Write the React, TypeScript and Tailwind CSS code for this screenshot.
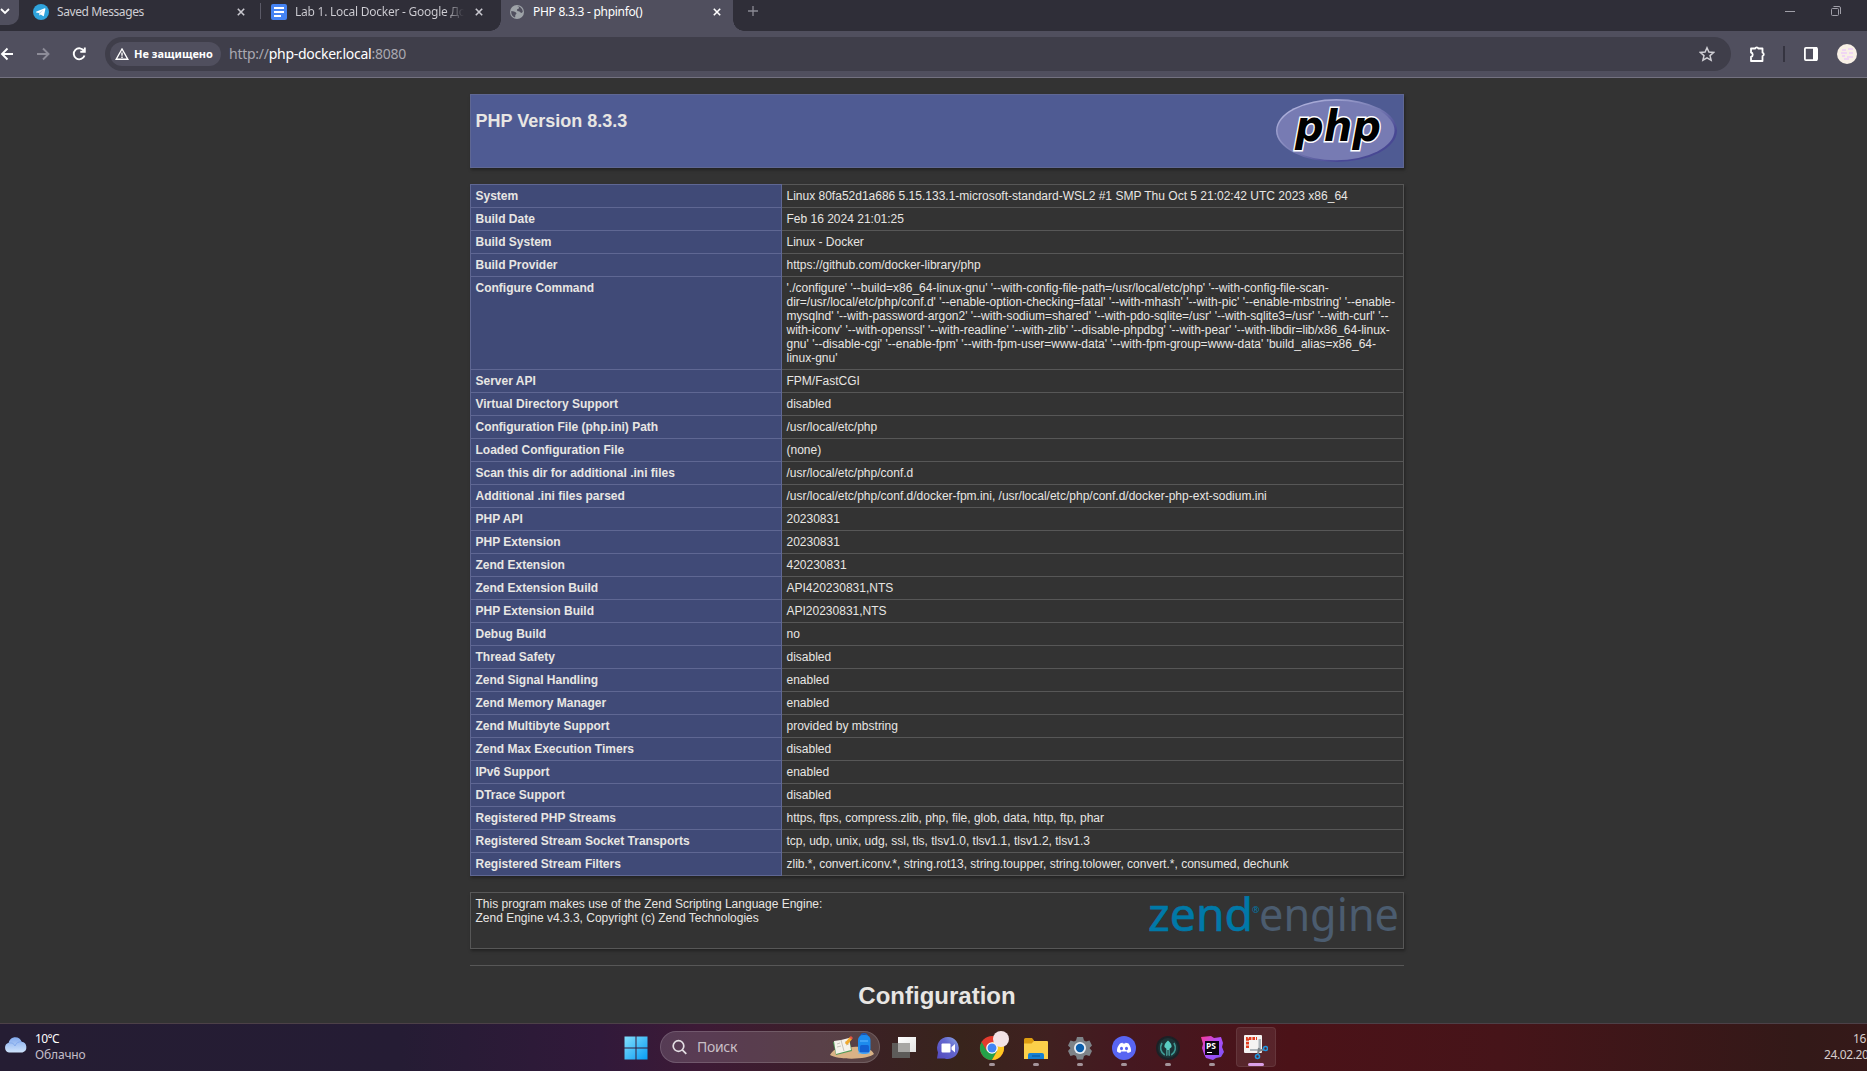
import React from "react";

const rows: [string, React.ReactNode][] = [
  ["System", "Linux 80fa52d1a686 5.15.133.1-microsoft-standard-WSL2 #1 SMP Thu Oct 5 21:02:42 UTC 2023 x86_64"],
  ["Build Date", "Feb 16 2024 21:01:25"],
  ["Build System", "Linux - Docker"],
  ["Build Provider", "https://github.com/docker-library/php"],
  [
    "Configure Command",
    <>
      './configure' '--build=x86_64-linux-gnu' '--with-config-file-path=/usr/local/etc/php' '--with-config-file-scan-
      <br />
      dir=/usr/local/etc/php/conf.d' '--enable-option-checking=fatal' '--with-mhash' '--with-pic' '--enable-mbstring' '--enable-
      <br />
      mysqlnd' '--with-password-argon2' '--with-sodium=shared' '--with-pdo-sqlite=/usr' '--with-sqlite3=/usr' '--with-curl' '--
      <br />
      with-iconv' '--with-openssl' '--with-readline' '--with-zlib' '--disable-phpdbg' '--with-pear' '--with-libdir=lib/x86_64-linux-
      <br />
      gnu' '--disable-cgi' '--enable-fpm' '--with-fpm-user=www-data' '--with-fpm-group=www-data' 'build_alias=x86_64-
      <br />
      linux-gnu'
    </>,
  ],
  ["Server API", "FPM/FastCGI"],
  ["Virtual Directory Support", "disabled"],
  ["Configuration File (php.ini) Path", "/usr/local/etc/php"],
  ["Loaded Configuration File", "(none)"],
  ["Scan this dir for additional .ini files", "/usr/local/etc/php/conf.d"],
  ["Additional .ini files parsed", "/usr/local/etc/php/conf.d/docker-fpm.ini, /usr/local/etc/php/conf.d/docker-php-ext-sodium.ini"],
  ["PHP API", "20230831"],
  ["PHP Extension", "20230831"],
  ["Zend Extension", "420230831"],
  ["Zend Extension Build", "API420230831,NTS"],
  ["PHP Extension Build", "API20230831,NTS"],
  ["Debug Build", "no"],
  ["Thread Safety", "disabled"],
  ["Zend Signal Handling", "enabled"],
  ["Zend Memory Manager", "enabled"],
  ["Zend Multibyte Support", "provided by mbstring"],
  ["Zend Max Execution Timers", "disabled"],
  ["IPv6 Support", "enabled"],
  ["DTrace Support", "disabled"],
  ["Registered PHP Streams", "https, ftps, compress.zlib, php, file, glob, data, http, ftp, phar"],
  ["Registered Stream Socket Transports", "tcp, udp, unix, udg, ssl, tls, tlsv1.0, tlsv1.1, tlsv1.2, tlsv1.3"],
  ["Registered Stream Filters", "zlib.*, convert.iconv.*, string.rot13, string.toupper, string.tolower, convert.*, consumed, dechunk"],
];

function Close({ bright = false }: { bright?: boolean }) {
  return (
    <svg width="8" height="8" viewBox="0 0 8 8" className={bright ? "text-white" : "text-[#c9c8cf]"}>
      <path d="M.8.8l6.4 6.4M7.2.8L.8 7.2" stroke="currentColor" strokeWidth="1.6" />
    </svg>
  );
}

function TabStrip() {
  return (
    <div className="flex h-[31px] bg-[#2f2e38] text-[12px] leading-[16px] text-[#cfced4]">
      <div className="flex h-[25px] w-[19px] items-start rounded-br-[10px] bg-[#504f5e]">
        <svg width="11" height="22" viewBox="0 0 11 22">
          <path d="M1 9l4 4 4-4" fill="none" stroke="#fff" strokeWidth="1.8" />
        </svg>
      </div>
      <div className="flex h-[23px] w-[241px] items-center pl-[14px]">
        <svg width="16" height="16" viewBox="0 0 16 16" className="shrink-0">
          <circle cx="8" cy="8" r="8" fill="#2fa3dc" />
          <path d="M3 7.8l8.7-3.5c.5-.2.8.1.7.6l-1.5 6.8c-.1.5-.5.6-.9.3L7.700 10.400l-1.200 1.200-.5-2.700L3.100 8.400z" fill="#fff" />
          <path d="M6 9l4.800-3.400L7 9.600l-.5 2z" fill="#b5d9ee" />
        </svg>
        <span className="ml-[8px] flex-1 whitespace-nowrap tracking-[-0.4px]">Saved Messages</span>
        <span className="mr-[15px]"><Close /></span>
      </div>
      <div className="mt-[3px] h-[16px] w-[1px] bg-[#5b5a67]" />
      <div className="flex h-[23px] w-[240px] items-center pl-[10px]">
        <svg width="16" height="16" viewBox="0 0 16 16" className="shrink-0">
          <rect width="16" height="16" rx="2" fill="#4583f3" />
          <path d="M3 4h10M3 8h10M3 12h7" stroke="#fff" strokeWidth="1.8" />
        </svg>
        <span className="ml-[8px] w-[169px] whitespace-nowrap bg-gradient-to-r from-[#cfced4] from-89% to-transparent to-100% bg-clip-text tracking-[-0.25px] text-transparent">
          Lab 1. Local Docker - Google До
        </span>
        <span className="ml-[11px]"><Close /></span>
      </div>
      <div className="w-[1px] bg-[#2f2e38]" />
      <div className="relative -ml-px flex h-[31px] w-[232px] bg-[#504f5e] pl-[9px] text-white">
        <div className="absolute -left-[11px] bottom-0 h-[11px] w-[11px] bg-[radial-gradient(circle_at_0_0,#2f2e38_10.500px,#504f5e_11px)]" />
        <div className="absolute -right-[11px] bottom-0 h-[11px] w-[11px] bg-[radial-gradient(circle_at_100%_0,#2f2e38_10.500px,#504f5e_11px)]" />
        <div className="flex h-[23px] w-full items-center">
          <svg width="14" height="14" viewBox="0 0 14 14" className="shrink-0">
            <circle cx="7" cy="7" r="7" fill="#9ea3a8" />
            <path d="M7 1c2 .5 2.500 2 1.500 2.800C7 4 6.500 5 7.500 6c1 .8 2.500.3 3 1.500.8 1 2 .2 2.300-1A6 6 0 0 0 7 1zM1.300 6c2 .2 3.700.8 4.700 1.600 1 1 .2 1.700-.5 2.200-.5.6 0 1.600-.5 2.700A6 6 0 0 1 1.300 6z" fill="#504f5e" />
          </svg>
          <span className="ml-[9px] flex-1 tracking-[-0.27px]">PHP 8.3.3 - phpinfo()</span>
          <span className="mr-[12px]"><Close bright /></span>
        </div>
      </div>
      <svg width="10" height="22" viewBox="0 0 10 22" className="ml-[15px]">
        <path d="M5 6v10M0 11h10" stroke="#8b8a94" strokeWidth="1.300" />
      </svg>
      <svg width="57" height="22" viewBox="0 0 57 22" className="mr-[26px] ml-auto" fill="none" stroke="#a09fa8">
        <path d="M1 11.500h10M49.500 6.500h5.500a1.500 1.500 0 0 1 1.500 1.500v6" />
        <rect x="47.500" y="8.500" width="7" height="7" rx="1" />
      </svg>
    </div>
  );
}

function Toolbar() {
  return (
    <div className="flex h-[47px] items-start border-b border-[#737180] bg-[#504f5e] pt-[6px]">
      <svg width="105" height="34" viewBox="0 0 105 34" fill="none" strokeWidth="1.900">
        <path d="M13 17H2M7.500 11.500L2 17l5.500 5.500" stroke="#fff" />
        <path d="M37 17h11M43 11.500l5.500 5.500-5.500 5.500" stroke="#8d8c98" />
        <path d="M84 14a5.500 5.500 0 1 0 .5 4.500M84.800 10.500v4.300h-4.500" stroke="#fff" />
      </svg>
      <div className="flex h-[34px] w-[1626px] items-center rounded-full bg-[#3f3e4a] pl-[5px]">
        <div className="flex h-[24px] w-[111px] items-center rounded-full bg-[#504f5e] pl-[5px] text-[11px] font-bold text-white">
          <svg width="14" height="12" viewBox="0 0 14 12" fill="none" stroke="#fff" strokeWidth="1.400">
            <path d="M7 1L1.200 11.200h11.600z" />
            <path d="M7 4.500v3.300M7 8.600v1.300" />
          </svg>
          <span className="ml-[5px] whitespace-nowrap">Не защищено</span>
        </div>
        <span className="-mt-[2px] ml-[8px] text-[14px] tracking-[-0.27px] text-[#a9a8b0]">
          http://<span className="text-white">php-docker.local</span>:8080
        </span>
        <svg width="16" height="16" viewBox="0 0 16 16" className="mr-[16px] ml-auto">
          <path d="M8 1.800l1.900 4.300 4.700.4-3.600 3.100 1.100 4.600L8 11.800l-4.100 2.400L5 9.600 1.400 6.500l4.700-.4z" fill="none" stroke="#d0cfd5" strokeWidth="1.500" />
        </svg>
      </div>
      <svg width="136" height="34" viewBox="0 0 136 34" fill="none">
        <path d="M20 11.500h4.200a1.600 1.600 0 0 1 3.100 0h4.200v4.200a1.700 1.700 0 0 1 0 3.300v5H20v-4.200a2.200 2.200 0 0 0 0-4.300z" stroke="#fff" strokeWidth="1.800" strokeLinejoin="round" />
        <path d="M53 9v16" stroke="#353440" strokeWidth="2" />
        <rect x="73.900" y="10.900" width="12.200" height="12.200" rx="1" stroke="#fff" strokeWidth="1.800" />
        <path d="M82 10h4v14h-4z" fill="#fff" />
        <circle cx="116" cy="17" r="10" fill="#f8f0e6" />
        <path d="M111 13h4M117 12h5M110 16h6M118 16h4M111 19h3M116 20h6M113 22h5" stroke="#f0d6f3" strokeWidth="2" />
      </svg>
    </div>
  );
}

function PhpLogo() {
  return (
    <svg width="122" height="65" viewBox="0 0 122 65">
      <defs>
        <linearGradient id="rim" x1="0" y1="0" x2="1" y2="1">
          <stop offset=".1" stopColor="#b3b5df" />
          <stop offset=".5" stopColor="#777bb3" />
          <stop offset=".75" stopColor="#484893" />
        </linearGradient>
      </defs>
      <ellipse cx="60.500" cy="32.500" rx="60.500" ry="31.500" fill="url(#rim)" />
      <ellipse cx="60" cy="32.500" rx="58.500" ry="29.700" fill="#777bb3" />
      <text
        x="19"
        y="42.500"
        textLength="86"
        lengthAdjust="spacingAndGlyphs"
        fontFamily="DejaVu Sans"
        fontSize="43"
        fontWeight="bold"
        fontStyle="italic"
        stroke="#fff"
        strokeWidth="3"
        paintOrder="stroke"
      >
        php
      </text>
    </svg>
  );
}

function ZendLogo() {
  return (
    <svg width="254" height="48" viewBox="0 0 254 48" className="overflow-visible" fontFamily="Noto Sans, sans-serif">
      <text x="1" y="34" fontSize="46" textLength="105" lengthAdjust="spacingAndGlyphs" fill="#0079a8" stroke="#0079a8" strokeWidth=".6">zend</text>
      <text x="105" y="15.500" fontSize="9" fill="#0079a8">®</text>
      <text x="112" y="34" fontSize="46" textLength="140" lengthAdjust="spacingAndGlyphs" fill="#4b5c6f">engine</text>
    </svg>
  );
}

function PhpInfo() {
  return (
    <div className="h-[945px] overflow-hidden bg-[#333333] pt-[16px] font-['Liberation_Sans',sans-serif] text-[12px] leading-[14px] text-[#e8e6e3]">
      <div className="ml-[470px] w-[934px]">
        <div className="flex h-[74px] justify-between border border-[#5f6793] bg-[#4f5b93] pl-[4.5px] shadow-[1px_2px_3px_rgba(0,0,0,0.35)]">
          <h1 className="mt-[16px] text-[18px] leading-[21px] font-bold">PHP Version 8.3.3</h1>
          <div className="mt-[3px] mr-[5px]"><PhpLogo /></div>
        </div>
        <table className="mt-[16px] w-[934px] table-fixed border-collapse shadow-[1px_2px_3px_rgba(0,0,0,0.35)]">
          <tbody>
            {rows.map(([name, value]) => (
              <tr key={name} className="align-top">
                <td className="w-[311px] border border-[#5f6793] bg-[#404a77] py-[4px] pr-[5px] pl-[4.5px] font-bold">{name}</td>
                <td className="border border-[#575757] py-[4px] pr-0 pl-[4.500px] whitespace-nowrap">{value}</td>
              </tr>
            ))}
          </tbody>
        </table>
        <div className="mt-[16px] flex h-[57px] justify-between border border-[#575757] pt-[4px] pl-[4.5px] shadow-[1px_2px_3px_rgba(0,0,0,0.35)]">
          <div>
            This program makes use of the Zend Scripting Language Engine:
            <br />
            Zend Engine v4.3.3, Copyright (c) Zend Technologies
          </div>
          <div className="mr-[2px]"><ZendLogo /></div>
        </div>
        <div className="mt-[16px] h-px bg-[#575757]" />
        <h1 className="mt-[16px] text-center text-[24px] leading-[28px] font-bold">Configuration</h1>
      </div>
    </div>
  );
}

function Slot({ children, running = false }: { children: React.ReactNode; running?: boolean }) {
  return (
    <div className="relative flex h-[47px] w-[44px] shrink-0 items-center justify-center">
      {children}
      {running && <div className="absolute bottom-[5px] left-[19px] h-[3px] w-[6px] rounded-full bg-[#a4949a]" />}
    </div>
  );
}

function Taskbar() {
  return (
    <div className="flex h-[48px] border-t border-[#4d4148] bg-[linear-gradient(90deg,#251d33_0px,#251c34_400px,#31193a_600px,#3d1a36_700px,#3c1f28_820px,#38241c_960px,#402020_1050px,#451820_1130px,#4b1218_1290px,#461419_1500px,#331918_1800px,#351919_1867px)] font-['Noto_Sans',sans-serif] text-[12px] leading-[16px]">
      <div className="flex w-[614px] pl-[4px]">
        <svg width="24" height="16" viewBox="0 0 24 16" className="mt-[13px]">
          <defs>
            <linearGradient id="cloud" x1="0" y1="0" x2="0" y2="1">
              <stop offset="0" stopColor="#82a9ed" />
              <stop offset="1" stopColor="#cfe3fb" />
            </linearGradient>
          </defs>
          <path d="M5 15.500a5 5 0 0 1-.3-9.700C5.500 2.500 8 .3 11.300.3c3.200 0 5.500 1.900 6.300 4.500A5.500 5.500 0 0 1 18.500 15.500z" fill="url(#cloud)" />
          <path d="M5 6c3-.5 5 .5 6 3 1-3 3.500-4.500 6.500-4.200" fill="none" stroke="#6f9be8" strokeWidth="1" opacity=".6" />
        </svg>
        <div className="mt-[7px] ml-[7px] text-[#c3bdc8]">
          <div className="tracking-[-0.6px] text-white">10°C</div>
          <div className="tracking-[-0.15px]">Облачно</div>
        </div>
      </div>
      <Slot>
        <svg width="24" height="24" viewBox="0 0 24 24">
          <defs>
            <linearGradient id="win" x1="0" y1="0" x2="1" y2="1">
              <stop offset="0" stopColor="#83dffc" />
              <stop offset="1" stopColor="#079cf4" />
            </linearGradient>
          </defs>
          <path d="M.5.5h11v11H.5zM12.500.5h11v11h-11zM.5 12.500h11v11H.5zM12.500 12.500h11v11h-11z" fill="url(#win)" />
        </svg>
      </Slot>
      <div className="mt-[7px] ml-[2px] flex h-[32px] w-[220px] items-center rounded-full border border-white/15 bg-white/15 pl-[11px]">
        <svg width="15" height="16" viewBox="0 0 15 16" fill="none" stroke="#e4dfe4" strokeWidth="1.700">
          <circle cx="6.500" cy="7" r="5.300" />
          <path d="M10.300 10.800l4 4" />
        </svg>
        <span className="-mt-px ml-[10px] text-[14px] tracking-[-0.3px] text-[#c8bfc6]">Поиск</span>
        <svg width="46" height="26" viewBox="0 0 46 26" className="mt-[-3px] mr-[4px] ml-auto">
          <path d="M1 22c5-9 11-5 15-6s8-3 14-2 12 1 15 7c-6 6-36 6-44 1z" fill="#d9b286" />
          <path d="M4 9l16-3 3 12-16 4z" fill="#4f9a57" />
          <path d="M5 8l7-1 8-2 2 12-15 4z" fill="#f5f2ea" />
          <path d="M12 7l3 11M8 11l3-1M8 14l4-1M16 9l3-1M17 12l3-1" stroke="#bbb6b0" strokeWidth=".8" />
          <path d="M17 11l5-6" stroke="#f1a92d" strokeWidth="3" />
          <path d="M21.500 5.500L23 4" stroke="#e45343" strokeWidth="3" />
          <path d="M32 3c0-3 6-3 6 0" fill="none" stroke="#175cc2" strokeWidth="1.500" />
          <rect x="29" y="2" width="12.500" height="19" rx="5" fill="#1d8bed" />
          <rect x="31" y="12" width="9" height="8" rx="1.500" fill="#1260d2" />
          <path d="M31 8h8M29 20h12" stroke="#62b9ff" strokeWidth="1" />
        </svg>
      </div>
      <div className="w-[2px]" />
      <Slot>
        <svg width="24" height="24" viewBox="0 0 24 24">
          <defs>
            <linearGradient id="front" x1="0" y1="0" x2="1" y2="1">
              <stop offset="0" stopColor="#fff" />
              <stop offset="1" stopColor="#e3e3e3" />
            </linearGradient>
          </defs>
          <path d="M0 7h18v15H0z" fill="#5d5b59" />
          <path d="M6 1h18v15H6z" fill="url(#front)" />
          <path d="M6 7h12v9H6z" fill="#a7a6a4" />
        </svg>
      </Slot>
      <Slot>
        <svg width="24" height="24" viewBox="0 0 24 24">
          <defs>
            <linearGradient id="chat" x1="0" y1="1" x2="1" y2="0">
              <stop offset="0" stopColor="#5348bd" />
              <stop offset=".6" stopColor="#6468cf" />
              <stop offset="1" stopColor="#91aee5" />
            </linearGradient>
          </defs>
          <path d="M12 1a11 11 0 1 1-3.500 21.500H1l1-6A11 11 0 0 1 12 1z" fill="url(#chat)" />
          <rect x="5.500" y="7.500" width="9" height="9" rx="1" fill="#fff" />
          <path d="M15.500 11l3.500-3v8.500l-3.500-3z" fill="#fff" />
        </svg>
      </Slot>
      <Slot running>
        <svg width="34" height="34" viewBox="-5 -5 34 34">
          <circle cx="12" cy="12" r="12" fill="#e33b2e" />
          <path d="M1.600 6A12 12 0 0 0 12 24l5.200-9L12 12 6.800 15z" fill="#24a148" />
          <path d="M12 24A12 12 0 0 0 22.400 6H12l5.200 9z" fill="#fdc822" />
          <circle cx="12" cy="12" r="5.800" fill="#fff" />
          <circle cx="12" cy="12" r="4.500" fill="#4285f4" />
          <circle cx="21" cy="3" r="8" fill="#f2e3e6" />
        </svg>
      </Slot>
      <Slot running>
        <svg width="24" height="24" viewBox="0 0 24 24">
          <path d="M0 3.500A1.500 1.500 0 0 1 1.500 2H8l2 2.500V8H0z" fill="#dd9c10" />
          <path d="M0 7.500h7.500L10 5h13a1 1 0 0 1 1 1v17H0z" fill="#fbd04a" />
          <path d="M4 23v-4a2 2 0 0 1 2-2h12a2 2 0 0 1 2 2v4z" fill="#1480d4" />
          <path d="M8 20h8" stroke="#0a58a0" strokeWidth="1.200" />
        </svg>
      </Slot>
      <Slot running>
        <svg width="24" height="24" viewBox="0 0 24 24">
          <path d="M9 1h6l1 3.500 2 1 3.500-1L24 9.500l-2.500 2.500L24 15l-2.500 5-3.500-1-2 1-1 3.500H9L8 20l-2-1-3.500 1L0 15l2.500-3L0 9.500l2.500-5L6 5.500l2-1z" fill="#7d8388" />
          <circle cx="12" cy="12" r="6" fill="#e7eef4" />
          <circle cx="12" cy="12" r="4.200" fill="#0b5fac" />
        </svg>
      </Slot>
      <Slot running>
        <svg width="24" height="24" viewBox="0 0 24 24">
          <circle cx="12" cy="12" r="12" fill="#5865f2" />
          <path d="M8 7.500c1-.6 2-.8 2.500-.8l.4.9h2.200l.4-.9c.8 0 2 .3 3 .8 1.900 2.700 2.700 5.500 2.500 8-1 .9-2.200 1.400-3.300 1.600l-.9-1.500H9.200l-.9 1.500C7 16.900 6 16.300 5 15.500c-.2-3 .8-5.500 3-8z" fill="#fff" />
          <ellipse cx="9.500" cy="12.500" rx="1.500" ry="1.700" fill="#5865f2" />
          <ellipse cx="14.500" cy="12.500" rx="1.500" ry="1.700" fill="#5865f2" />
        </svg>
      </Slot>
      <Slot running>
        <svg width="24" height="24" viewBox="0 0 24 24">
          <circle cx="12" cy="12" r="12" fill="#1c2126" />
          <circle cx="12" cy="12" r="10" fill="#1c3437" />
          <path d="M12 4.500c2.300 1.800 3.800 3.800 3.600 6.500l-2 1.800V20l-1-.4V14h-1.200v5.600l-1 .4v-7.200l-2-1.800C8.200 8.300 9.700 6.300 12 4.500z" fill="#5accc2" />
          <path d="M6 7c-2.500 4.500-1.500 9.500 2.800 12M18 7c2.500 4.500 1.500 9.500-2.800 12" fill="none" stroke="#3f9b95" strokeWidth="1.600" />
        </svg>
      </Slot>
      <Slot running>
        <svg width="24" height="24" viewBox="0 0 24 24">
          <defs>
            <linearGradient id="storm" x1="0" y1="0" x2="1" y2="1">
              <stop offset="0" stopColor="#fb3a96" />
              <stop offset=".45" stopColor="#b34df6" />
              <stop offset="1" stopColor="#7654f5" />
            </linearGradient>
          </defs>
          <path d="M1 1l10-1 3 2 7-1 2 6-1 4 2 5-3 5-5 1-3 2-7-2-2-4-2-6 1-4z" fill="url(#storm)" />
          <path d="M5 5h14v14H5z" fill="#0b0511" />
          <text x="6" y="12.500" fontFamily="Noto Sans" fontWeight="bold" fontSize="8.500" fill="#fff">PS</text>
          <path d="M7 16.500h5" stroke="#fff" strokeWidth="1" />
        </svg>
      </Slot>
      <div className="relative mt-[3px] ml-[2px] flex h-[40px] w-[40px] justify-center rounded-[4px] border border-white/8 bg-white/8 pt-[6px]">
        <svg width="24" height="26" viewBox="0 0 24 26">
          <rect x="0" y="1" width="18" height="18" rx="1" fill="#f5f3f2" />
          <path d="M3.500 14V4.500H13" fill="none" stroke="#e13b1d" strokeWidth="3" strokeDasharray="2.600 1" />
          <path d="M14.500 5H17v10h-2.500zM6 15h11v2H6z" fill="#adb4b9" />
          <path d="M14 17l6-1.500M15 14l-1 6" stroke="#7d8388" strokeWidth="2" />
          <circle cx="21.500" cy="14.500" r="2" fill="none" stroke="#2196e0" strokeWidth="1.600" />
          <circle cx="13.500" cy="22.500" r="2" fill="none" stroke="#2196e0" strokeWidth="1.600" />
        </svg>
        <div className="absolute bottom-0 left-[11px] h-[3px] w-[16px] rounded-full bg-[#dba0e6]" />
      </div>
      <div className="mt-[7px] ml-auto w-[43px] text-[#d6cccc]">
        <div className="pl-[29px] tracking-[-0.3px] whitespace-nowrap">16</div>
        <div className="tracking-[-0.4px] whitespace-nowrap">24.02.20</div>
      </div>
    </div>
  );
}

export default function App() {
  return (
    <div className="h-[1071px] w-[1867px] overflow-hidden font-['Noto_Sans',sans-serif]">
      <TabStrip />
      <Toolbar />
      <PhpInfo />
      <Taskbar />
    </div>
  );
}
